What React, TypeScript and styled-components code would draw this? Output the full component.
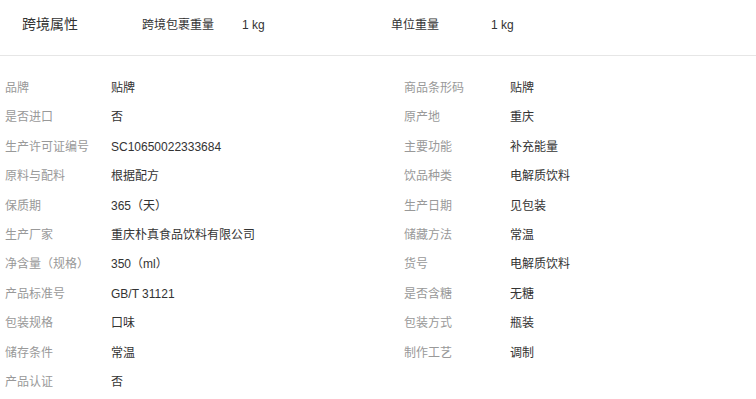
import React from 'react'
import styled, { createGlobalStyle } from 'styled-components'

const GlobalStyle = createGlobalStyle`
  body {
    margin: 0;
    background: #fff;
    font-family: "Liberation Sans", "Noto Sans CJK SC", sans-serif;
  }
`

interface Attr {
  label: string
  value: string
}

const headerAttrs: Attr[] = [
  { label: '跨境包裹重量', value: '1 kg' },
  { label: '单位重量', value: '1 kg' },
]

const attrs: Attr[] = [
  { label: '品牌', value: '贴牌' },
  { label: '商品条形码', value: '贴牌' },
  { label: '是否进口', value: '否' },
  { label: '原产地', value: '重庆' },
  { label: '生产许可证编号', value: 'SC10650022333684' },
  { label: '主要功能', value: '补充能量' },
  { label: '原料与配料', value: '根据配方' },
  { label: '饮品种类', value: '电解质饮料' },
  { label: '保质期', value: '365（天）' },
  { label: '生产日期', value: '见包装' },
  { label: '生产厂家', value: '重庆朴真食品饮料有限公司' },
  { label: '储藏方法', value: '常温' },
  { label: '净含量（规格）', value: '350（ml）' },
  { label: '货号', value: '电解质饮料' },
  { label: '产品标准号', value: 'GB/T 31121' },
  { label: '是否含糖', value: '无糖' },
  { label: '包装规格', value: '口味' },
  { label: '包装方式', value: '瓶装' },
  { label: '储存条件', value: '常温' },
  { label: '制作工艺', value: '调制' },
  { label: '产品认证', value: '否' },
]

export default function App() {
  return (
    <Page>
      <GlobalStyle />
      <Header>
        <Title>跨境属性</Title>
        {headerAttrs.map((a) => (
          <HeaderItem key={a.label}>
            <HeaderLabel>{a.label}</HeaderLabel>
            <HeaderValue>{a.value}</HeaderValue>
          </HeaderItem>
        ))}
      </Header>
      <Grid>
        {attrs.map((a) => (
          <Row key={a.label}>
            <Label>{a.label}</Label>
            <Value>{a.value}</Value>
          </Row>
        ))}
      </Grid>
    </Page>
  )
}

const Page = styled.div`
  width: 756px;
  height: 399px;
  overflow: hidden;
  background: #fff;
`

const Header = styled.div`
  display: flex;
  align-items: baseline;
  height: 56px;
  box-sizing: border-box;
  padding: 13px 0 0 22px;
  line-height: 22px;
  border-bottom: 1px solid #e6e6e6;
`

const Title = styled.div`
  width: 120px;
  font-size: 14px;
  color: #333;
`

const HeaderItem = styled.div`
  display: flex;
  align-items: baseline;
  width: 249px;
  font-size: 12px;
  color: #333;
`

const HeaderLabel = styled.span`
  width: 100px;
`

const HeaderValue = styled.span``

const Grid = styled.div`
  display: grid;
  grid-template-columns: 399px 1fr;
  grid-auto-rows: 29.4px;
  padding: 18px 0 0 5px;
`

const Row = styled.div`
  display: flex;
  align-items: baseline;
  font-size: 12px;
  line-height: 29.4px;
`

const Label = styled.span`
  width: 106px;
  flex-shrink: 0;
  color: #999;
`

const Value = styled.span`
  color: #333;
`
